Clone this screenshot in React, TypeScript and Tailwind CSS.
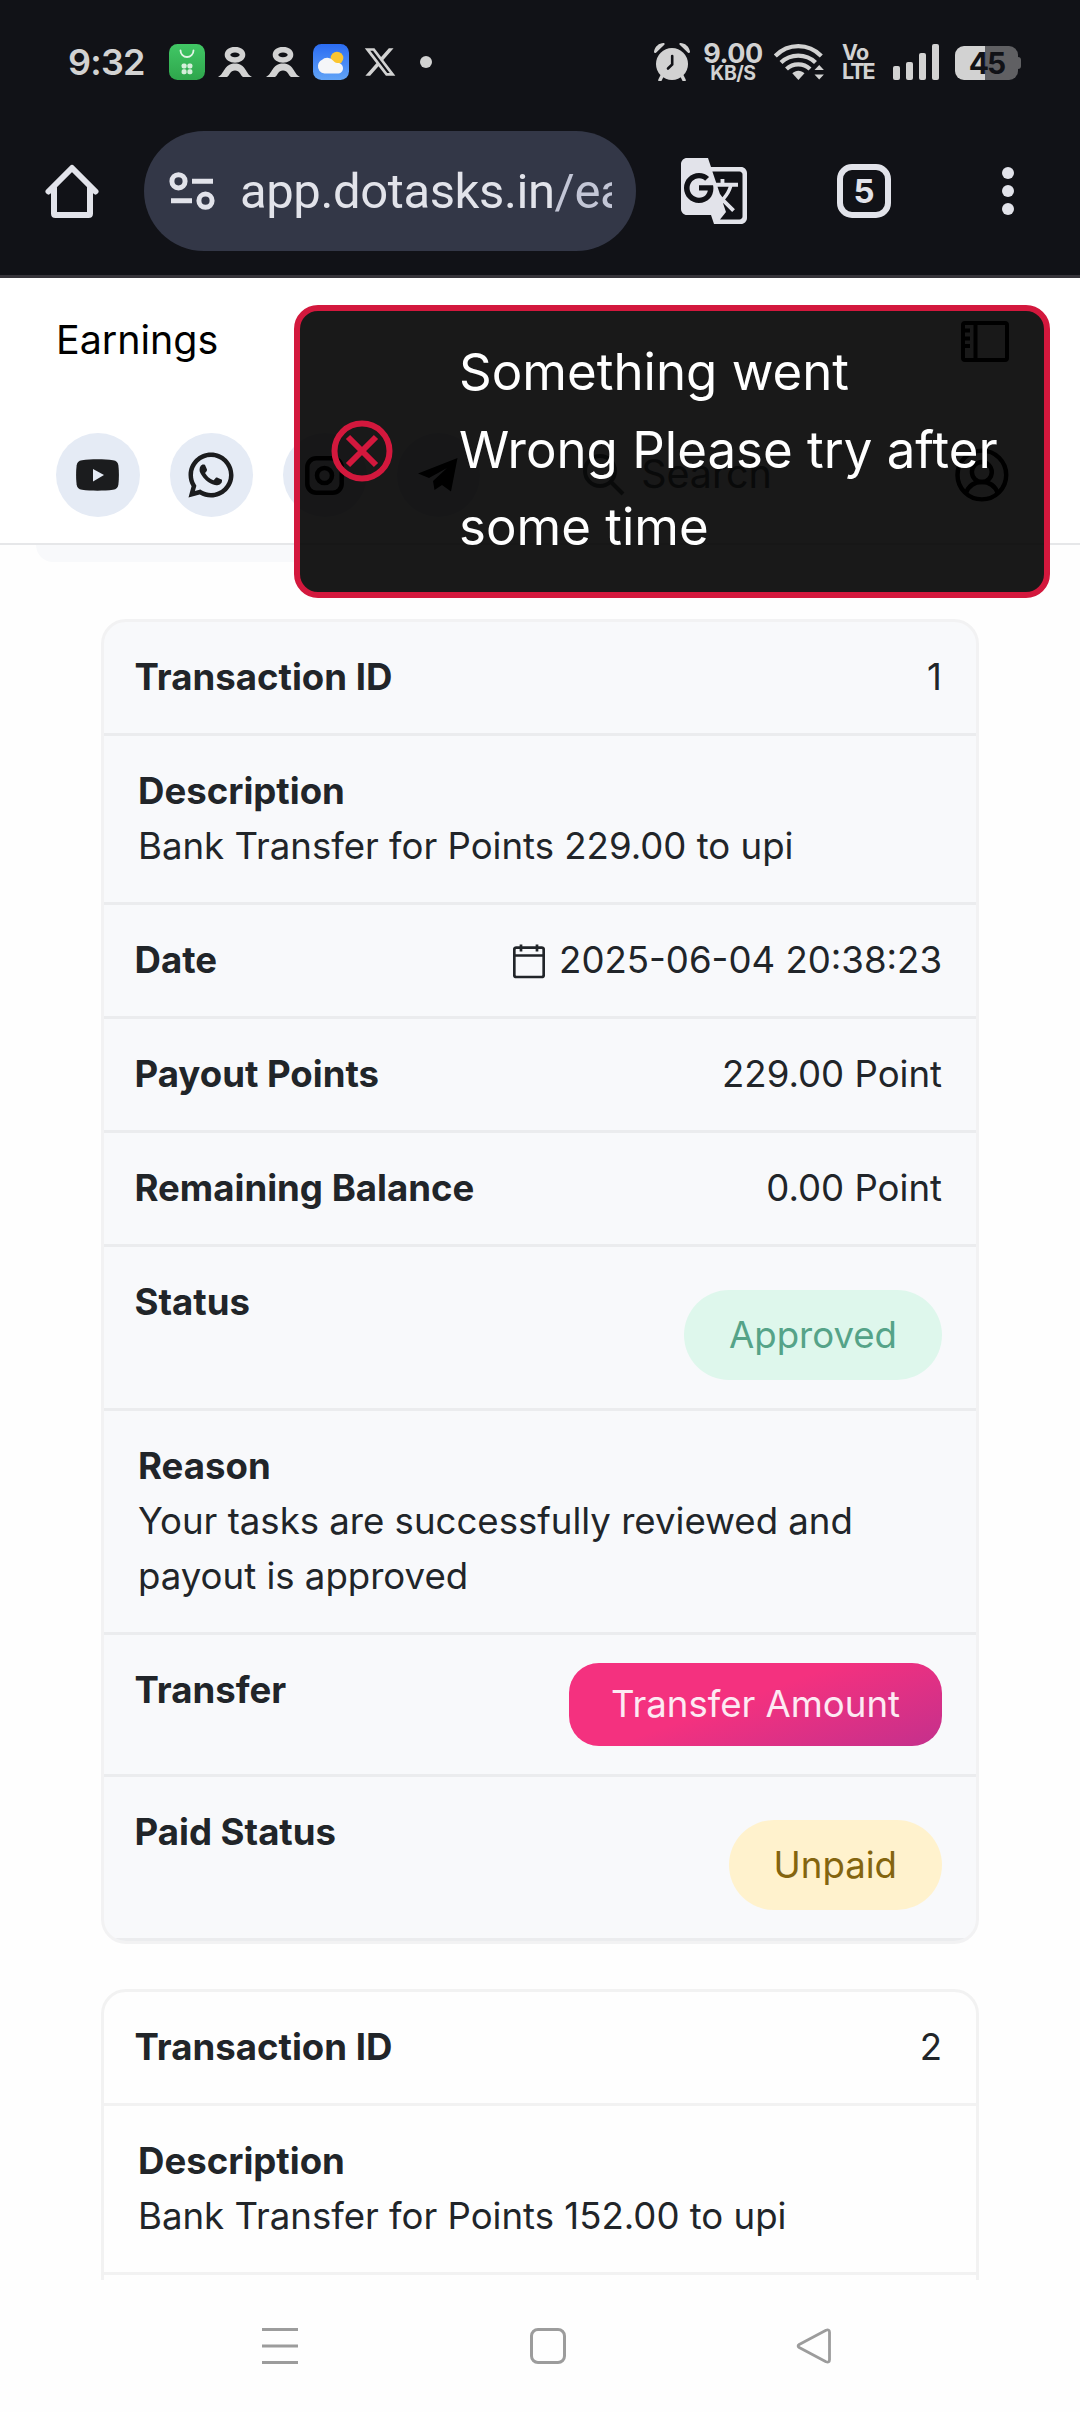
import type { ReactNode } from 'react';
import clsx from 'clsx';
import { FaXTwitter } from 'react-icons/fa6';
import { MdGTranslate } from 'react-icons/md';
import { RiWhatsappLine } from 'react-icons/ri';

interface Transaction {
  id: number;
  description: string;
  date: string;
  points: string;
  balance: string;
  status: string;
  reason: string;
  paid: string;
}

const transactions: Transaction[] = [
  {
    id: 1,
    description: 'Bank Transfer for Points 229.00 to upi',
    date: '2025-06-04 20:38:23',
    points: '229.00 Point',
    balance: '0.00 Point',
    status: 'Approved',
    reason: 'Your tasks are successfully reviewed and payout is approved',
    paid: 'Unpaid',
  },
];

function AppStoreIcon() {
  return (
    <svg width="36" height="36" viewBox="0 0 36 36">
      <defs>
        <linearGradient id="store" x1="0" y1="0" x2="0" y2="1">
          <stop offset="0" stopColor="#41c765" />
          <stop offset="1" stopColor="#2fa64c" />
        </linearGradient>
      </defs>
      <rect width="36" height="36" rx="8.5" fill="url(#store)" />
      <path d="M11.5 6.5a6.5 6.5 0 0 0 13 0" fill="none" stroke="#e3f5e7" strokeWidth="1.8" strokeLinecap="round" />
      <g fill="#d5efdb">
        <rect x="12.6" y="19.5" width="5" height="5" rx="1.8" />
        <rect x="18.4" y="19.5" width="5" height="5" rx="1.8" />
        <rect x="12.6" y="25.3" width="5" height="5" rx="1.8" />
        <rect x="18.4" y="25.3" width="5" height="5" rx="1.8" />
      </g>
    </svg>
  );
}

function PersonIcon({ className }: { className?: string }) {
  return (
    <svg width="34" height="30" viewBox="0 0 34 30" className={className}>
      <ellipse cx="17" cy="7.8" rx="7.5" ry="5.2" fill="none" stroke="#d2d2d2" strokeWidth="5.6" />
      <path d="M0 30C6.5 27 6 16.500 17 16.500S27.500 27 34 30h-9C22 28 22 23.500 17 23.500S12 28 9 30z" fill="#d2d2d2" />
    </svg>
  );
}

function WeatherIcon() {
  return (
    <svg width="36" height="36" viewBox="0 0 36 36" className="ml-[13px]">
      <defs>
        <linearGradient id="sky" x1="0" y1="0" x2="0" y2="1">
          <stop offset="0" stopColor="#2b6cf3" />
          <stop offset="1" stopColor="#62a4f6" />
        </linearGradient>
      </defs>
      <rect width="36" height="36" rx="8.5" fill="url(#sky)" />
      <circle cx="24" cy="14" r="6.3" fill="#fbc52f" />
      <path d="M11.500 29.500a7 7 0 0 1-6.500-8c.3-2.800 2-4.500 3.800-5.400A7.500 7.500 0 0 1 20 16.500c1.500 1.700 2.500 2.500 4.500 2.400 2.500-.2 5.300 1.600 5.500 5 .1 3.200-2.200 5.600-5.500 5.600z" fill="#f5f6f8" />
    </svg>
  );
}

function AlarmIcon() {
  return (
    <svg width="36" height="38" viewBox="0 0 36 38">
      <circle cx="18" cy="21" r="16" fill="#d2d2d2" />
      <path d="M8 33l-2 4M28 33l2 4" stroke="#d2d2d2" strokeWidth="3.5" strokeLinecap="round" />
      <path d="M0 8.500C1 3.500 5 0 9.500 0c1 0 1.500.9.800 1.700L2 9.800C1.200 10.500-.1 9.800 0 8.500zM36 8.500C35 3.500 31 0 26.500 0c-1 0-1.500.9-.8 1.700l8.300 8.100c.8.7 2.100 0 2-1.300z" fill="#d2d2d2" />
      <path d="M18.200 13v8.500L14 25.500" fill="none" stroke="#111217" strokeWidth="2.6" strokeLinecap="round" />
    </svg>
  );
}

function WifiIcon() {
  return (
    <svg width="50" height="36" viewBox="0 0 50 36" className="ml-[10px]">
      <g fill="none" stroke="#d2d2d2" strokeWidth="4.2">
        <path d="M1.300 12C14-1.200 34.500-1.200 47.300 12" />
        <path d="M7 18.500c9.500-9.300 25-9.300 34.500 0" />
        <path d="M12.500 25c6.500-6.300 17-6.300 23.500 0" />
      </g>
      <path d="M18.300 29.300c3.500-3.500 8.700-3.500 12.200 0L24.400 36z" fill="#d2d2d2" />
      <path d="M40.500 26l4.700-5 4.700 5zM40.500 30.500l4.700 5 4.700-5z" fill="#d2d2d2" />
    </svg>
  );
}

function StatusBar() {
  return (
    <div className="flex h-[124px] items-center pr-[59px] pl-[68px] text-[#d2d2d2]">
      <span className="w-[101px] text-[36px] leading-none font-semibold tracking-[-0.8px]">9:32</span>
      <AppStoreIcon />
      <PersonIcon className="ml-[13px]" />
      <PersonIcon className="ml-[14px]" />
      <WeatherIcon />
      <FaXTwitter className="ml-[14px] h-[36px] w-[34px]" />
      <span className="ml-[23px] size-3 rounded-full bg-[#d2d2d2]" />
      <div className="ml-auto flex items-center">
        <AlarmIcon />
        <div className="ml-[12px] flex w-[62px] flex-col items-center pt-[3px] font-bold">
          <span className="text-[27px] leading-[19px] tracking-[-0.5px]">9.00</span>
          <span className="text-[19.5px] leading-[20px] tracking-[-0.5px]">KB/S</span>
        </div>
        <WifiIcon />
        <div className="ml-[18px] flex w-8 flex-col text-[21.5px] leading-[19px] font-bold">
          <span className="tracking-[-0.8px]">Vo</span>
          <span className="tracking-[-2px]">LTE</span>
        </div>
        <div className="ml-[19px] flex h-9 items-end gap-[6px]">
          <span className="h-[14px] w-[7px] rounded-[2px] bg-[#d2d2d2]" />
          <span className="h-[18px] w-[7px] rounded-[2px] bg-[#d2d2d2]" />
          <span className="h-[27px] w-[7px] rounded-[2px] bg-[#d2d2d2]" />
          <span className="h-9 w-[7px] rounded-[2px] bg-[#d2d2d2]" />
        </div>
        <div className="ml-[16px] flex items-center pt-[2px]">
          <span className="flex h-[34px] w-[63px] items-center justify-center rounded-[9px] bg-linear-to-r from-[#d2d2d2] from-48% to-[#606063] to-48% text-[30px] leading-none font-bold tracking-[-2px] text-[#111217]">
            45
          </span>
          <span className="h-3 w-[3px] rounded-r-[3px] bg-[#606063]" />
        </div>
      </div>
    </div>
  );
}

function BrowserBar() {
  return (
    <div className="mt-[7px] flex h-[120px] items-center pl-[45px]">
      <svg width="54" height="54" viewBox="0 0 54 54" fill="none" stroke="#e2e3ea" strokeWidth="6" strokeLinecap="round" strokeLinejoin="round">
        <path d="M3.500 27.500L27 4l23.500 23.500" />
        <path d="M9 24v25.500q0 1.500 1.500 1.500h33q1.500 0 1.500-1.500V24" />
      </svg>
      <div className="ml-[45px] flex h-[120px] w-[492px] items-center rounded-full bg-[#333747] pl-[25px]">
        <svg width="46" height="38" viewBox="0 0 46 38" fill="none" stroke="#e2e3ea" strokeWidth="5">
          <circle cx="9.5" cy="9.3" r="6.6" />
          <path d="M23 9.300h21M2 28.700h21" />
          <circle cx="36.5" cy="28.7" r="6.6" />
        </svg>
        <div className="ml-[25px] w-[372px] overflow-hidden pt-[2px] font-[Roboto] text-[49px] leading-[60px] tracking-[-0.4px] whitespace-nowrap text-[#e2e3ea]">
          app.dotasks.in<span className="text-[#c3c6d6]">/earnings</span>
        </div>
      </div>
      <MdGTranslate className="ml-[42px] size-[72px] text-[#e2e3ea]" />
      <div className="ml-[87px] flex size-[54px] items-center justify-center rounded-[15px] border-6 border-[#e2e3ea] text-[33px] leading-none font-bold text-[#e2e3ea]">
        5
      </div>
      <div className="ml-[111px] flex flex-col gap-[6px]">
        <span className="size-3 rounded-full bg-[#e2e3ea]" />
        <span className="size-3 rounded-full bg-[#e2e3ea]" />
        <span className="size-3 rounded-full bg-[#e2e3ea]" />
      </div>
    </div>
  );
}

function SocialLink({ children }: { children: ReactNode }) {
  return (
    <span className="flex size-[84px] items-center justify-center rounded-full bg-[#e5ebf5] text-[#1b1c1e]">
      {children}
    </span>
  );
}

function PageHeader() {
  return (
    <header className="border-b-2 border-[#e6e7e9] bg-white pt-[31px] pr-[71px] pb-[26px] pl-[56px]">
      <div className="flex h-16 items-center justify-between">
        <h1 className="text-[39.4px] leading-none text-black">Earnings</h1>
        <svg width="48" height="41" viewBox="0 0 48 41" fill="none" stroke="#000" strokeWidth="4">
          <rect x="2" y="2" width="44" height="37" rx="2" />
          <path d="M14.500 2v37M2 9.500h7M2 17.500h7M2 25h7" />
        </svg>
      </div>
      <div className="mt-[60px] flex items-center gap-[30px]">
        <SocialLink>
          <svg width="43" height="32" viewBox="0 0 43 32">
            <path d="M6 1.200C15 0 28 0 37 1.200c3.500.5 5 2.300 5.400 5.300.7 6 .7 13 0 19-.4 3-1.900 4.800-5.400 5.300-9 1.200-22 1.200-31 0-3.500-.5-5-2.300-5.400-5.300-.7-6-.7-13 0-19C1 3.500 2.500 1.700 6 1.200z" fill="currentColor" />
            <path d="M17 10l11 6-11 6.500z" fill="#e5ebf5" />
          </svg>
        </SocialLink>
        <SocialLink>
          <RiWhatsappLine className="size-[54px]" />
        </SocialLink>
        <SocialLink>
          <svg width="39" height="39" viewBox="0 0 39 39" fill="none" stroke="#000" strokeWidth="4.5">
            <rect x="2.3" y="2.3" width="34.4" height="34.4" rx="9" />
            <circle cx="19.5" cy="19.5" r="7.5" />
          </svg>
        </SocialLink>
        <SocialLink>
          <svg width="40" height="34" viewBox="0 0 40 34" fill="#000">
            <path d="M0 15.500L39.500 0 33 33.500l-9-6.500-7.500 5-1.500-9L29 10 11 20z" />
          </svg>
        </SocialLink>
        <div className="ml-[45px] flex h-[84px] w-[372px] items-center rounded-2xl bg-[#f8f8f8] pl-[28px] text-[#5f6368]">
          <svg width="42" height="42" viewBox="0 0 42 42" fill="none" stroke="currentColor" strokeWidth="4">
            <circle cx="17" cy="17" r="15" />
            <path d="M28 28l12 12" />
          </svg>
          <span className="ml-[16px] text-[39.4px] leading-none">Search</span>
        </div>
        <svg width="54" height="54" viewBox="0 0 54 54" fill="none" stroke="#000" strokeWidth="4.5">
          <circle cx="27" cy="27" r="24.5" />
          <circle cx="27" cy="24" r="10" />
          <path d="M11 45c3-7.500 9-11 16-11s13 3.500 16 11" />
        </svg>
      </div>
    </header>
  );
}

function Toast() {
  return (
    <div
      role="alert"
      className="absolute top-[305px] left-[294px] flex h-[293px] w-[756px] items-center rounded-[24px] border-6 border-[#d3183d] bg-black/90 pl-[31px]"
    >
      <svg width="62" height="62" viewBox="0 0 62 62" fill="none" stroke="#d3183d" strokeWidth="6" className="-mt-[2px]">
        <circle cx="31" cy="31" r="27.5" />
        <path d="M17 17l28 28M45 17L17 45" />
      </svg>
      <p className="-mt-[4px] ml-[66px] w-[560px] text-[51px] leading-[77.5px] text-white">
        Something went
        <br />
        Wrong Please try after
        <br />
        some time
      </p>
    </div>
  );
}

interface RowProps {
  label: string;
  stacked?: boolean;
  plain?: boolean;
  children?: ReactNode;
}

function Row({ label, stacked, plain, children }: RowProps) {
  return (
    <div
      className={clsx(
        'border-b-3 py-[28px] pr-[34px]',
        plain ? 'border-[#f2f2f2]' : 'border-[#ebecee]',
        stacked ? 'pl-[34px]' : 'flex items-start justify-between pl-[30.5px]',
      )}
    >
      <div className="font-bold">{label}</div>
      {children}
    </div>
  );
}

function CalendarIcon() {
  return (
    <svg width="32" height="35" viewBox="0 0 32 35" fill="none" stroke="#212529" strokeWidth="2.7" className="mt-[2px]">
      <rect x="1.3" y="3.6" width="29.4" height="29.4" rx="2" />
      <path d="M1.300 11.500h29.400M8 .5v7M24 .5v7" />
    </svg>
  );
}

function TransactionCard({ item }: { item: Transaction }) {
  return (
    <div className="overflow-hidden rounded-[25px] border-3 border-[#f2f2f3] bg-[#f8f9fb]">
      <Row label="Transaction ID">{item.id}</Row>
      <Row label="Description" stacked>
        {item.description}
      </Row>
      <Row label="Date">
        <span className="flex items-center gap-[14px]">
          <CalendarIcon />
          {item.date}
        </span>
      </Row>
      <Row label="Payout Points">{item.points}</Row>
      <Row label="Remaining Balance">{item.balance}</Row>
      <Row label="Status">
        <span className="mt-[15px] flex h-[90px] items-center rounded-full bg-[#def7ec] px-[45px] text-[#55a388]">
          {item.status}
        </span>
      </Row>
      <Row label="Reason" stacked>
        {item.reason}
      </Row>
      <Row label="Transfer">
        <button className="flex h-[83px] items-center rounded-[30px] bg-[linear-gradient(160deg,#f4317f_45%,#c4308c_100%)] px-[42px] text-[#fdeaf3]">
          Transfer Amount
        </button>
      </Row>
      <Row label="Paid Status">
        <span className="mt-[15px] flex h-[90px] items-center rounded-full bg-[#fff2cd] px-[45px] text-[#84650f]">
          {item.paid}
        </span>
      </Row>
    </div>
  );
}

function NavBar() {
  return (
    <nav className="flex h-[132px] items-center bg-[#fefefe] pl-[262px]">
      <svg width="36" height="36" viewBox="0 0 36 36" stroke="#9c9c9c" strokeWidth="3">
        <path d="M0 1.500h36M0 18h36M0 34.500h36" />
      </svg>
      <span className="ml-[232px] size-9 rounded-[8px] border-3 border-[#9c9c9c]" />
      <svg width="36" height="36" viewBox="0 0 36 36" fill="none" stroke="#9c9c9c" strokeWidth="2.8" strokeLinejoin="round" className="ml-[230px]">
        <path d="M3.200 16.500L30 2.200q3.500-1.200 3.500 2v27.600q0 3.200-3.500 2L3.200 19.500q-2.200-1.500 0-3z" />
      </svg>
    </nav>
  );
}

export default function App() {
  return (
    <div className="relative flex h-[2412px] w-[1080px] flex-col overflow-hidden bg-white font-[Inter,sans-serif]">
      <div className="h-[278px] shrink-0 border-b-3 border-[#36343a] bg-[#111217]">
        <StatusBar />
        <BrowserBar />
      </div>
      <PageHeader />
      <main className="min-h-0 flex-1 overflow-hidden bg-[#fefefe] text-[36.6px] leading-[55px] text-[#212529]">
        {/* bottom edge of the table heading, scrolled under the header */}
        <div className="mx-[36px] h-[17px] rounded-b-[22px] bg-[#f8f9fb]" />
        <div className="mx-[101px] mt-[57px] flex flex-col gap-[45px]">
          {transactions.map((item) => (
            <TransactionCard key={item.id} item={item} />
          ))}
          <div className="h-[400px] rounded-[25px] border-3 border-[#f2f2f2] bg-[#fefefe]">
            <Row label="Transaction ID" plain>
              2
            </Row>
            <Row label="Description" stacked plain>
              Bank Transfer for Points 152.00 to upi
            </Row>
          </div>
        </div>
      </main>
      <NavBar />
      <Toast />
    </div>
  );
}
